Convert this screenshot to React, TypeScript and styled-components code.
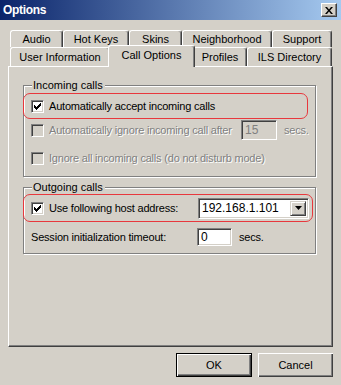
import styled, { createGlobalStyle } from "styled-components";

const GlobalStyle = createGlobalStyle`
    html, body {
        margin: 0;
        padding: 0;
        background: #d4d0c8;
    }
    body {
        font-family: "Liberation Sans", Arial, sans-serif;
        font-size: 11px;
        color: #000;
    }
`;

const topTabs = [
    { label: "Audio", width: 53 },
    { label: "Hot Keys", width: 66 },
    { label: "Skins", width: 53 },
    { label: "Neighborhood", width: 90 },
    { label: "Support", width: 60 },
];

const bottomTabs = [
    { label: "User Information", width: 100 },
    { label: "Call Options", width: 83, active: true },
    { label: "Profiles", width: 54 },
    { label: "ILS Directory", width: 85 },
];

function CheckBox({ checked, disabled }: { checked?: boolean; disabled?: boolean }) {
    return (
        <Check $disabled={disabled}>
            {checked && (
                <svg width="7" height="7" viewBox="0 0 7 7">
                    <path d="M0 2h1v1h1v1h1V3h1V2h1V1h1V0h1v3h-1v1h-1v1h-1v1h-1v1H2V6H1V5H0z" fill="#000" />
                </svg>
            )}
        </Check>
    );
}

export default function App() {
    return (
        <>
            <GlobalStyle />
            <Window>
                <TitleBar>
                    <TitleText>Options</TitleText>
                    <CloseButton>
                        <svg width="8" height="7" viewBox="0 0 8 7">
                            <path d="M0 0h2l2 2.5L6 0h2L5 3.5 8 7H6L4 4.5 2 7H0l3-3.5z" fill="#000" />
                        </svg>
                    </CloseButton>
                </TitleBar>

                <Body>
                    <TabRow $height={17}>
                        {topTabs.map((t) => (
                            <Tab key={t.label} $width={t.width}>
                                {t.label}
                            </Tab>
                        ))}
                    </TabRow>
                    <TabRow $height={19}>
                        {bottomTabs.map((t) => (
                            <Tab key={t.label} $width={t.width} $active={t.active}>
                                {t.label}
                            </Tab>
                        ))}
                    </TabRow>

                    <Panel>
                        <GroupBox $top={18} $height={92}>
                            <Legend>Incoming calls</Legend>
                            <Highlight $width={285} $height={26}>
                                <CheckBox checked />
                                <Label>Automatically accept incoming calls</Label>
                            </Highlight>
                            <Row $height={20} $top={1}>
                                <CheckBox disabled />
                                <Label $disabled $width={192}>
                                    Automatically ignore incoming call after
                                </Label>
                                <TextInput $width={36} $height={20} $disabled>
                                    15
                                </TextInput>
                                <Label $disabled $gap={7}>
                                    secs.
                                </Label>
                            </Row>
                            <Row $height={20} $top={8}>
                                <CheckBox disabled />
                                <Label $disabled>Ignore all incoming calls (do not disturb mode)</Label>
                            </Row>
                        </GroupBox>

                        <GroupBox $top={10} $height={67}>
                            <Legend>Outgoing calls</Legend>
                            <Highlight $width={290} $height={28} $top={6}>
                                <CheckBox checked />
                                <Label $width={149}>Use following host address:</Label>
                                <Combo>
                                    <ComboValue>192.168.1.101</ComboValue>
                                    <DropButton>
                                        <svg width="7" height="4" viewBox="0 0 7 4">
                                            <path d="M0 0h7L3.5 4z" fill="#000" />
                                        </svg>
                                    </DropButton>
                                </Combo>
                            </Highlight>
                            <Row $height={20} $top={5}>
                                <PlainLabel $width={166}>Session initialization timeout:</PlainLabel>
                                <TextInput $width={35} $height={18}>
                                    0
                                </TextInput>
                                <Label $gap={7}>secs.</Label>
                            </Row>
                        </GroupBox>
                    </Panel>

                    <Footer>
                        <Button $default>OK</Button>
                        <Button>Cancel</Button>
                    </Footer>
                </Body>
            </Window>
        </>
    );
}

const Window = styled.div`
    width: 341px;
    height: 385px;
    display: flex;
    flex-direction: column;
    background: #d4d0c8;
    box-sizing: border-box;
    overflow: hidden;
`;

const TitleBar = styled.div`
    height: 20px;
    padding: 0 4px 0 3px;
    display: flex;
    align-items: center;
    justify-content: space-between;
    background: linear-gradient(to right, #0a246a, #a6caf0);
`;

const TitleText = styled.div`
    color: #fff;
    font-weight: 700;
    font-size: 12px;
    letter-spacing: -0.3px;
`;

const CloseButton = styled.div`
    width: 16px;
    height: 14px;
    box-sizing: border-box;
    display: flex;
    align-items: center;
    justify-content: center;
    background: #d4d0c8;
    border-top: 1px solid #fff;
    border-left: 1px solid #fff;
    border-right: 1px solid #404040;
    border-bottom: 1px solid #404040;
    box-shadow: inset -1px -1px 0 #808080;
`;

const Body = styled.div`
    padding: 10px 8px 0 8px;
    display: flex;
    flex-direction: column;
`;

const TabRow = styled.div<{ $height: number }>`
    height: ${(p) => p.$height}px;
    padding-left: 2px;
    display: flex;
    align-items: flex-end;
`;

const Tab = styled.div<{ $width: number; $active?: boolean }>`
    position: relative;
    box-sizing: border-box;
    width: ${(p) => p.$width + (p.$active ? 4 : 0)}px;
    height: ${(p) => (p.$active ? "calc(100% + 3px)" : "100%")};
    margin: ${(p) => (p.$active ? "0 -2px -1px" : "0")};
    z-index: ${(p) => (p.$active ? 2 : 1)};
    display: flex;
    align-items: center;
    justify-content: center;
    padding-bottom: ${(p) => (p.$active ? 3 : 0)}px;
    background: #d4d0c8;
    border-top: 1px solid #fff;
    border-left: 1px solid #fff;
    border-right: 1px solid #404040;
    border-radius: 3px 3px 0 0;
    box-shadow: inset -1px 0 0 #808080;
    font-size: 11px;
    white-space: nowrap;
`;

const Panel = styled.div`
    position: relative;
    z-index: 1;
    box-sizing: border-box;
    height: 281px;
    padding: 0 0 0 14px;
    border-top: 1px solid #fff;
    border-left: 1px solid #fff;
    border-right: 1px solid #404040;
    border-bottom: 1px solid #404040;
    box-shadow: inset -1px -1px 0 #808080;
    display: flex;
    flex-direction: column;
`;

const GroupBox = styled.div<{ $top: number; $height: number }>`
    position: relative;
    box-sizing: border-box;
    width: 293px;
    height: ${(p) => p.$height}px;
    margin-top: ${(p) => p.$top}px;
    padding: 0 0 0 7px;
    border: 1px solid #808080;
    box-shadow: inset 1px 1px 0 #fff, 1px 1px 0 #fff;
    display: flex;
    flex-direction: column;
`;

const Legend = styled.div`
    position: absolute;
    top: -8px;
    left: 8px;
    padding: 0 2px 0 1px;
    background: #d4d0c8;
    font-size: 11px;
    line-height: 14px;
`;

const Highlight = styled.div<{ $width: number; $height: number; $top?: number }>`
    box-sizing: border-box;
    width: ${(p) => p.$width}px;
    height: ${(p) => p.$height}px;
    margin: ${(p) => p.$top ?? 7}px 0 0 -8px;
    padding-left: 7px;
    border: 1px solid #e8383d;
    border-radius: 7px;
    display: flex;
    align-items: center;
`;

const Row = styled.div<{ $height: number; $top: number }>`
    height: ${(p) => p.$height}px;
    margin-top: ${(p) => p.$top}px;
    display: flex;
    align-items: center;
`;

const Check = styled.div<{ $disabled?: boolean }>`
    flex: none;
    box-sizing: border-box;
    width: 13px;
    height: 13px;
    display: flex;
    align-items: center;
    justify-content: center;
    background: ${(p) => (p.$disabled ? "#d4d0c8" : "#fff")};
    border-top: 1px solid #808080;
    border-left: 1px solid #808080;
    border-right: 1px solid #fff;
    border-bottom: 1px solid #fff;
    box-shadow: inset 1px 1px 0 #404040, inset -1px -1px 0 #d4d0c8;
`;

const Label = styled.div<{ $disabled?: boolean; $width?: number; $gap?: number }>`
    flex: none;
    margin-left: ${(p) => p.$gap ?? 5}px;
    width: ${(p) => (p.$width ? `${p.$width}px` : "auto")};
    font-size: 11px;
    letter-spacing: -0.2px;
    white-space: nowrap;
    color: ${(p) => (p.$disabled ? "#808080" : "#000")};
    text-shadow: ${(p) => (p.$disabled ? "1px 1px 0 #fff" : "none")};
`;

const PlainLabel = styled.div<{ $width: number }>`
    flex: none;
    width: ${(p) => p.$width}px;
    font-size: 11px;
    letter-spacing: -0.2px;
    white-space: nowrap;
`;

const TextInput = styled.div<{ $width: number; $height: number; $disabled?: boolean }>`
    flex: none;
    box-sizing: border-box;
    width: ${(p) => p.$width}px;
    height: ${(p) => p.$height}px;
    padding-left: 3px;
    display: flex;
    align-items: center;
    font-size: 12px;
    background: ${(p) => (p.$disabled ? "#d4d0c8" : "#fff")};
    color: ${(p) => (p.$disabled ? "#808080" : "#000")};
    border-top: 1px solid #808080;
    border-left: 1px solid #808080;
    border-right: 1px solid #fff;
    border-bottom: 1px solid #fff;
    box-shadow: inset 1px 1px 0 #404040, inset -1px -1px 0 #d4d0c8;
`;

const Combo = styled.div`
    flex: none;
    box-sizing: border-box;
    width: 111px;
    height: 21px;
    padding: 2px;
    display: flex;
    align-items: stretch;
    background: #fff;
    border-top: 1px solid #808080;
    border-left: 1px solid #808080;
    border-right: 1px solid #fff;
    border-bottom: 1px solid #fff;
    box-shadow: inset 1px 1px 0 #404040, inset -1px -1px 0 #d4d0c8;
`;

const ComboValue = styled.div`
    flex: 1;
    padding-left: 1px;
    display: flex;
    align-items: center;
    font-size: 12px;
`;

const DropButton = styled.div`
    flex: none;
    box-sizing: border-box;
    width: 16px;
    display: flex;
    align-items: center;
    justify-content: center;
    background: #d4d0c8;
    border-top: 1px solid #d4d0c8;
    border-left: 1px solid #d4d0c8;
    border-right: 1px solid #404040;
    border-bottom: 1px solid #404040;
    box-shadow: inset 1px 1px 0 #fff, inset -1px -1px 0 #808080;
`;

const Footer = styled.div`
    margin-top: 6px;
    display: flex;
    justify-content: flex-end;
    gap: 6px;
`;

const Button = styled.div<{ $default?: boolean }>`
    box-sizing: border-box;
    width: ${(p) => (p.$default ? 76 : 75)}px;
    height: 24px;
    display: flex;
    align-items: center;
    justify-content: center;
    font-size: 11px;
    background: #d4d0c8;
    border: ${(p) => (p.$default ? "1px solid #000" : "none")};
    box-shadow: inset 1px 1px 0 #fff, inset -1px -1px 0 #404040, inset -2px -2px 0 #808080;
`;
